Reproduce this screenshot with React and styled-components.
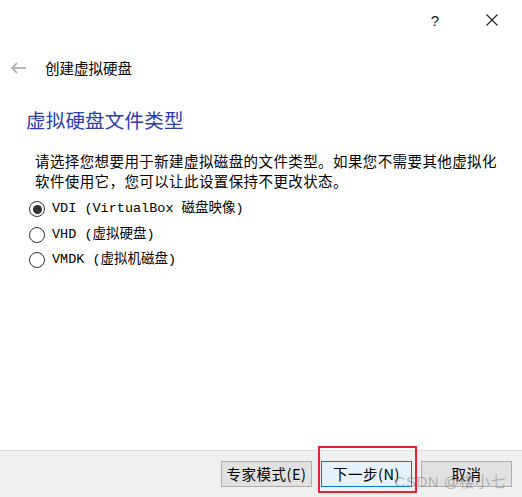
import styled, { createGlobalStyle } from 'styled-components';

const GlobalStyle = createGlobalStyle`
	html, body {
		margin: 0;
		padding: 0;
		background: #ffffff;
	}
	body {
		font-family: 'Noto Sans CJK SC', 'Liberation Sans', sans-serif;
		color: #000;
	}
`;

const Dialog = styled.div`
	width: 522px;
	height: 497px;
	display: flex;
	flex-direction: column;
	background: #ffffff;
	overflow: hidden;
`;

const TitleBar = styled.div`
	height: 40px;
	display: flex;
	justify-content: flex-end;
	align-items: center;
	padding-right: 24px;
	gap: 47px;
`;

const TitleButton = styled.span`
	font-family: 'Liberation Sans', sans-serif;
	font-size: ${(p) => p.size || 14}px;
	line-height: 1;
	color: #222;
	display: flex;
	align-items: center;
`;

const NavRow = styled.div`
	display: flex;
	align-items: center;
	height: 22px;
	margin-top: 17px;
	padding-left: 10px;
	gap: 18px;
`;

const NavTitle = styled.span`
	font-size: 14.5px;
	line-height: 22px;
	color: #000;
`;

const Body = styled.div`
	padding: 0 25px 0 26px;
	flex: 1;
`;

const Heading = styled.h1`
	margin: 28px 0 0 0;
	font-weight: normal;
	font-size: 19.5px;
	line-height: 26px;
	color: #2c3cae;
	letter-spacing: 0.2px;
`;

const Description = styled.p`
	margin: 18px 0 0 9px;
	font-size: 14.5px;
	line-height: 20px;
	letter-spacing: 0.4px;
`;

const RadioList = styled.div`
	margin-top: 8px;
	margin-left: 3px;
	display: flex;
	flex-direction: column;
	gap: 5.5px;
`;

const RadioRow = styled.label`
	display: flex;
	align-items: center;
	height: 20px;
	gap: 7px;
`;

const RadioCircle = styled.span`
	width: 16px;
	height: 16px;
	box-sizing: border-box;
	border-radius: 50%;
	border: 1.5px solid #333;
	display: flex;
	align-items: center;
	justify-content: center;
	background: #fff;

	&::after {
		content: '';
		display: ${(p) => (p.checked ? 'block' : 'none')};
		width: 9px;
		height: 9px;
		border-radius: 50%;
		background: #333;
	}
`;

const RadioText = styled.span`
	font-family: 'Liberation Mono', 'Noto Sans CJK SC', monospace;
	font-size: 13.5px;
	line-height: 20px;
	color: #000;
`;

const Footer = styled.div`
	height: 47px;
	box-sizing: border-box;
	background: #f0f0f0;
	border-top: 1px solid #dcdcdc;
	display: flex;
	justify-content: flex-end;
	align-items: flex-start;
	padding: 10px 10px 0 0;
	gap: 9px;
	position: relative;
`;

const ButtonWrap = styled.div`
	position: relative;
`;

const Button = styled.button`
	width: 91px;
	height: 26px;
	box-sizing: border-box;
	margin: 0;
	padding: 0;
	font-family: 'Noto Sans CJK SC', sans-serif;
	font-size: 14.5px;
	line-height: 1;
	color: #000;
	background: ${(p) => (p.primary ? '#e5f1fb' : '#e1e1e1')};
	border: 1px solid ${(p) => (p.primary ? '#0078d7' : '#adadad')};
	border-radius: 0;
	letter-spacing: 0.5px;
`;

const Highlight = styled.div`
	position: absolute;
	left: -3px;
	top: -15px;
	width: 99px;
	height: 47px;
	box-sizing: border-box;
	border: 2px solid #e8232b;
	pointer-events: none;
`;

const Watermark = styled.span`
	position: absolute;
	right: 16px;
	bottom: 6px;
	font-family: 'Liberation Sans', 'Noto Sans CJK SC', sans-serif;
	font-size: 15px;
	color: rgba(120, 120, 120, 0.5);
	pointer-events: none;
	letter-spacing: 0.5px;
`;

const BackArrow = () => (
	<svg width="17" height="12" viewBox="0 0 17 12">
		<path d="M16 6H2M7 1L2 6l5 5" fill="none" stroke="#b4b4b4" strokeWidth="1.8" />
	</svg>
);

const CloseIcon = () => (
	<svg width="12" height="12" viewBox="0 0 12 12">
		<path d="M0.5 0.5l11 11M11.5 0.5l-11 11" stroke="#222" strokeWidth="1.1" />
	</svg>
);

const options = [
	{ key: 'vdi', label: 'VDI (VirtualBox 磁盘映像)', checked: true },
	{ key: 'vhd', label: 'VHD (虚拟硬盘)' },
	{ key: 'vmdk', label: 'VMDK (虚拟机磁盘)' },
];

export default function App() {
	return (
		<>
			<GlobalStyle />
			<Dialog>
				<TitleBar>
					<TitleButton size={15}>?</TitleButton>
					<TitleButton>
						<CloseIcon />
					</TitleButton>
				</TitleBar>
				<NavRow>
					<BackArrow />
					<NavTitle>创建虚拟硬盘</NavTitle>
				</NavRow>
				<Body>
					<Heading>虚拟硬盘文件类型</Heading>
					<Description>
						请选择您想要用于新建虚拟磁盘的文件类型。如果您不需要其他虚拟化
						<br />
						软件使用它，您可以让此设置保持不更改状态。
					</Description>
					<RadioList>
						{options.map((opt) => (
							<RadioRow key={opt.key}>
								<RadioCircle checked={opt.checked} />
								<RadioText>{opt.label}</RadioText>
							</RadioRow>
						))}
					</RadioList>
				</Body>
				<Footer>
					<Button>专家模式(E)</Button>
					<ButtonWrap>
						<Button primary>下一步(N)</Button>
						<Highlight />
					</ButtonWrap>
					<Button>取消</Button>
					<Watermark>CSDN @楼小七</Watermark>
				</Footer>
			</Dialog>
		</>
	);
}
